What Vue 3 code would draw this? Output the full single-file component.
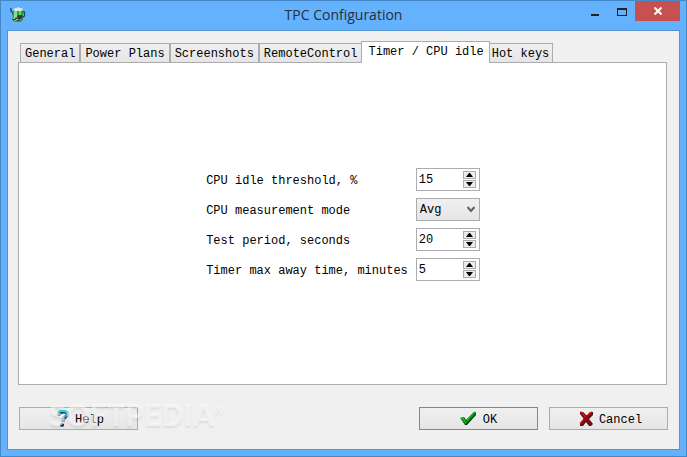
<template>
  <div class="window">
    <header class="titlebar">
      <svg class="app-icon" viewBox="0 0 16 16" aria-hidden="true">
        <path d="M0 2h1v2l2 2v2" fill="none" stroke="#26445f" stroke-width="1.3" />
        <path d="M12 5h2.5v4L12 11" fill="none" stroke="#26445f" stroke-width="1.3" />
        <path d="M3 3h10v10l-2 2H5l-2-2z" fill="#329b42" />
        <path d="M4 4h3v10H4z" fill="#74e58b" />
        <path d="M9 4h2v5H9z" fill="#62d675" />
        <path d="M3 3l2-2h2l1-1 2 1h2l1 2-2 1H5z" fill="#dce5e6" />
        <path d="M7 9l2-1 3 0 1 2-2 2H8z" fill="#303c46" />
        <path d="M2 11l3 1 1-2 2 2 2 1-2 1-3-1-2 1z" fill="#4b3925" />
        <path d="M3 11h1v1H3zM6 12h2v1H6z" fill="#d2b783" />
      </svg>
      <h1>TPC Configuration</h1>
      <div class="window-controls">
        <button type="button" class="control" aria-label="Minimize">
          <svg width="10" height="16" viewBox="0 0 10 16"><path d="M1 11h8v2H1z" fill="#222" /></svg>
        </button>
        <button type="button" class="control" aria-label="Maximize">
          <svg width="10" height="16" viewBox="0 0 10 16" shape-rendering="crispEdges">
            <path d="M0 5h10v8H0zm1 2v5h8V7z" fill="#222" fill-rule="evenodd" />
          </svg>
        </button>
        <button type="button" class="control close" aria-label="Close">
          <svg width="8" height="8" viewBox="0 0 8 8"><path d="M0.5 0.5l7 7M7.5 0.5l-7 7" stroke="#fff" stroke-width="2" /></svg>
        </button>
      </div>
    </header>

    <main class="client">
      <div class="tabs" role="tablist">
        <button
          v-for="tab in tabs"
          :key="tab"
          type="button"
          role="tab"
          class="tab"
          :class="{ active: tab === activeTab }"
          :aria-selected="tab === activeTab"
          @click="activeTab = tab"
        >{{ tab }}</button>
      </div>

      <section class="panel" role="tabpanel">
        <div class="form">
          <template v-for="field in fields" :key="field.id">
            <label :for="field.id">{{ field.label }}</label>
            <div v-if="field.options" class="field combo">
              <select :id="field.id" v-model="field.value">
                <option v-for="option in field.options" :key="option">{{ option }}</option>
              </select>
              <svg class="chevron" width="8" height="7" viewBox="0 0 8 7" aria-hidden="true">
                <path d="M0.5 1l3.5 4 3.5-4" fill="none" stroke="#606060" stroke-width="2" />
              </svg>
            </div>
            <div v-else class="field spin">
              <input :id="field.id" v-model.number="field.value" type="number" min="0" />
              <div class="steps">
                <button type="button" :aria-label="'Increase ' + field.label" @click="field.value++">
                  <svg width="7" height="4" viewBox="0 0 7 4"><path d="M0 4l3-4h1l3 4z" /></svg>
                </button>
                <button type="button" :aria-label="'Decrease ' + field.label" @click="field.value--">
                  <svg width="7" height="4" viewBox="0 0 7 4"><path d="M0 0h7L4 4H3z" /></svg>
                </button>
              </div>
            </div>
          </template>
        </div>
      </section>

      <footer class="actions">
        <button type="button" class="action help">
          <svg width="12" height="17" viewBox="0 0 12 17" aria-hidden="true">
            <path d="M2 6V4l3-2h3l2 1v3L6 9v3" fill="none" stroke="#20306e" stroke-width="3" />
            <path d="M1 5V3l3-2h4l2 2v2L6 8v3" fill="none" stroke="#319ba9" stroke-width="2" />
            <path d="M1 4V3l2-2h5l2 1" fill="none" stroke="#20dfd0" stroke-width="2" />
            <path d="M3 14l2-1 2 1v2l-2 1-2-1z" fill="#20306e" />
            <path d="M3 14h2v1H3z" fill="#319ba9" />
          </svg>
          <span>Help</span>
        </button>
        <button type="button" class="action ok">
          <svg width="17" height="15" viewBox="0 0 17 15" aria-hidden="true">
            <path d="M1 8l3-2 2 3 8-8h2v3L7 14H5z" fill="#0d3517" />
            <path d="M0 7l3-1 3 4 8-9h2v1L6 13H5z" fill="#079a16" />
            <path d="M1 7h2l2 3M7 9l7-8h1" fill="none" stroke="#18d126" />
          </svg>
          <span>OK</span>
        </button>
        <button type="button" class="action cancel">
          <svg width="14" height="15" viewBox="0 0 14 15" aria-hidden="true">
            <path d="M1 2l3-1 4 4 3-4h3v3l-4 4 4 5-2 2h-2l-3-4-3 4H1v-3l4-4-4-5z" fill="#3c161a" />
            <path d="M1 1h3l3 4 4-4h2v2L9 7l4 5-2 2-4-5-4 5H1v-2l4-5-4-5z" fill="#930a0e" />
            <path d="M1 1h2l3 5M9 4l3-3h1M4 9l-3 4" fill="none" stroke="#e11b1b" />
          </svg>
          <span>Cancel</span>
        </button>
        <div class="watermark" aria-hidden="true">SOFTPEDIA<sup>®</sup></div>
      </footer>
    </main>
  </div>
</template>

<script setup>
import { ref } from 'vue';

const tabs = ['General', 'Power Plans', 'Screenshots', 'RemoteControl', 'Timer / CPU idle', 'Hot keys'];
const activeTab = ref('Timer / CPU idle');

const fields = ref([
  { id: 'threshold', label: 'CPU idle threshold, %', value: 15 },
  { id: 'mode', label: 'CPU measurement mode', value: 'Avg', options: ['Avg', 'Min', 'Max'] },
  { id: 'period', label: 'Test period, seconds', value: 20 },
  { id: 'away', label: 'Timer max away time, minutes', value: 5 }
]);
</script>

<style>
body {
  margin: 0;
}
</style>

<style scoped>
* {
  box-sizing: border-box;
}

.window {
  display: flex;
  flex-direction: column;
  min-height: 100vh;
  padding: 0 6px 6px;
  border: 1px solid #4588c7;
  background: #64b2fd;
  color: #000;
  font: 12px/16px "Courier New", "Liberation Mono", monospace;
}

button,
input,
select {
  margin: 0;
  padding: 0;
  border-radius: 0;
  color: inherit;
  font: inherit;
}

.titlebar {
  display: grid;
  grid-template-columns: 1fr auto 1fr;
  align-items: start;
  height: 29px;
}

.app-icon {
  width: 16px;
  height: 16px;
  margin: 6px 0 0 3px;
}

h1 {
  margin: 4px 0 0;
  color: #272f38;
  font: 14px/20px "Open Sans", sans-serif;
}

.window-controls {
  display: flex;
  justify-content: flex-end;
}

.control {
  display: flex;
  align-items: center;
  justify-content: center;
  width: 27px;
  height: 20px;
  border: 0;
  background: transparent;
}

.control.close {
  width: 45px;
  background: #c75050;
}

.client {
  display: flex;
  flex: 1;
  flex-direction: column;
  padding: 10px 12px 19px 10px;
  border: 1px solid #5594cf;
  background: #f0f0f0;
}

.tabs {
  display: flex;
  align-items: flex-end;
  padding-left: 2px;
}

.tab {
  height: 19px;
  padding: 2px 4px 0;
  border: 1px solid #acacac;
  border-bottom: 0;
  background: linear-gradient(#f0f0f0, #e5e5e5);
  white-space: nowrap;
}

.tab.active {
  z-index: 1;
  height: 22px;
  margin: 0 -1px -1px;
  padding: 0 5px 2px 6px;
  background: #fff;
}

.tab:last-child {
  padding: 2px 3px 0 2px;
}

.panel {
  display: flex;
  flex: 1;
  align-items: center;
  justify-content: center;
  padding: 2px 0 0 1px;
  border: 1px solid #acacac;
  background: #fff;
}

.form {
  display: grid;
  grid-template-columns: auto 64px;
  gap: 7px 8px;
  align-items: center;
}

label {
  padding-top: 3px;
}

.field {
  display: flex;
  align-items: center;
  height: 23px;
  border: 1px solid #abadb3;
  background: #fff;
}

.field input {
  flex: 1;
  width: 0;
  height: 19px;
  padding-left: 2px;
  border: 0;
  outline: 0;
  background: transparent;
  appearance: textfield;
}

.field input::-webkit-inner-spin-button {
  appearance: none;
}

.steps {
  display: grid;
  gap: 1px;
  margin-right: 3px;
}

.steps button {
  display: flex;
  align-items: center;
  justify-content: center;
  width: 13px;
  height: 8px;
  border: 1px solid #acacac;
  background: #ececec;
}

.combo {
  position: relative;
  background: linear-gradient(#f0f0f0, #e5e5e5);
}

.combo select {
  width: 100%;
  height: 100%;
  padding-left: 3px;
  border: 0;
  background: transparent;
  appearance: none;
}

.chevron {
  position: absolute;
  right: 4px;
  pointer-events: none;
}

.actions {
  position: relative;
  display: flex;
  gap: 11px;
  margin: 22px -1px 0 1px;
}

.action {
  display: flex;
  align-items: center;
  justify-content: center;
  gap: 6px;
  width: 119px;
  height: 23px;
  border: 1px solid #acacac;
  background: linear-gradient(#f0f0f0, #e5e5e5);
}

.action span {
  padding-top: 2px;
}

.help,
.cancel {
  padding-left: 4px;
}

.help {
  margin-right: auto;
}

.action.ok {
  border-color: #3399ff;
}

.watermark {
  position: absolute;
  top: -9px;
  left: 30px;
  color: rgba(255, 255, 255, 0.55);
  font: 900 30px/32px Lato, sans-serif;
  text-shadow: 0 2px 2px rgba(0, 0, 0, 0.08);
  pointer-events: none;
}

.watermark sup {
  font-size: 12px;
  line-height: 12px;
  vertical-align: 12px;
}
</style>
